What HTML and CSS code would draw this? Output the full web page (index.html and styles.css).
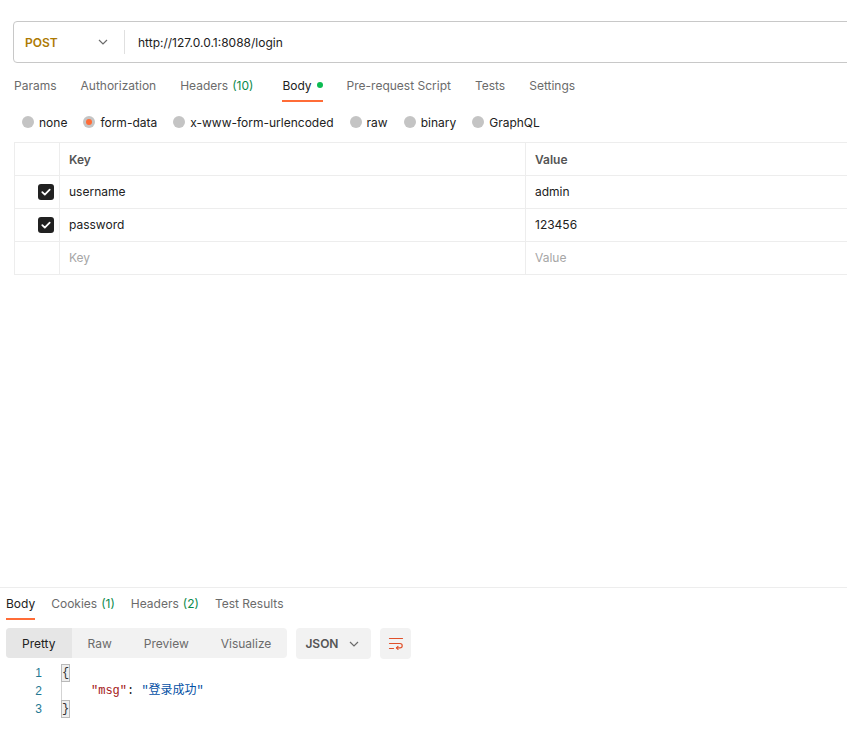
FILE: index.html
```html
<!DOCTYPE html>
<html>
<head>
<meta charset="utf-8">
<link rel="stylesheet" href="styles.css">
</head>
<body>
<div class="app">
  <section class="request">
    <div class="urlbar">
      <div class="method">
        <span class="method-name">POST</span>
        <svg class="chev" width="10" height="6" viewBox="0 0 10 6"><path d="M1 1l4 4 4-4" fill="none" stroke="#6b6b6b" stroke-width="1.2"/></svg>
      </div>
      <div class="divider"></div>
      <div class="url">http://127.0.0.1:8088/login</div>
    </div>

    <nav class="tabs">
      <span class="tab">Params</span>
      <span class="tab">Authorization</span>
      <span class="tab">Headers <span class="count wide">(10)</span></span>
      <span class="tab active">Body <span class="dot"></span></span>
      <span class="tab">Pre-request Script</span>
      <span class="tab">Tests</span>
      <span class="tab">Settings</span>
    </nav>

    <div class="radios">
      <label class="radio"><span class="circle"></span>none</label>
      <label class="radio"><span class="circle on"></span>form-data</label>
      <label class="radio"><span class="circle"></span>x-www-form-urlencoded</label>
      <label class="radio"><span class="circle"></span>raw</label>
      <label class="radio"><span class="circle"></span>binary</label>
      <label class="radio"><span class="circle"></span>GraphQL</label>
    </div>

    <div class="table">
      <div class="row head">
        <div class="cell check"></div>
        <div class="cell key">Key</div>
        <div class="cell val">Value</div>
      </div>
      <div class="row">
        <div class="cell check"><span class="cb"><svg width="16" height="16" viewBox="0 0 16 16"><path d="M4.3 8.2l2.5 2.4 4.9-5" fill="none" stroke="#fff" stroke-width="1.8" stroke-linecap="round" stroke-linejoin="round"/></svg></span></div>
        <div class="cell key">username</div>
        <div class="cell val">admin</div>
      </div>
      <div class="row">
        <div class="cell check"><span class="cb"><svg width="16" height="16" viewBox="0 0 16 16"><path d="M4.3 8.2l2.5 2.4 4.9-5" fill="none" stroke="#fff" stroke-width="1.8" stroke-linecap="round" stroke-linejoin="round"/></svg></span></div>
        <div class="cell key">password</div>
        <div class="cell val">123456</div>
      </div>
      <div class="row">
        <div class="cell check"></div>
        <div class="cell key ph">Key</div>
        <div class="cell val ph">Value</div>
      </div>
    </div>
  </section>

  <section class="response">
    <nav class="rtabs">
      <span class="rtab active">Body</span>
      <span class="rtab">Cookies <span class="count">(1)</span></span>
      <span class="rtab">Headers <span class="count">(2)</span></span>
      <span class="rtab">Test Results</span>
    </nav>
    <div class="toolbar">
      <div class="seg">
        <span class="seg-item sel">Pretty</span>
        <span class="seg-item">Raw</span>
        <span class="seg-item">Preview</span>
        <span class="seg-item">Visualize</span>
      </div>
      <div class="fmt">
        <span class="fmt-name">JSON</span>
        <svg width="10" height="6" viewBox="0 0 10 6"><path d="M1 1l4 4 4-4" fill="none" stroke="#6b6b6b" stroke-width="1.2"/></svg>
      </div>
      <div class="wrap">
        <svg width="16" height="16" viewBox="0 0 16 16" fill="none" stroke="#e0502a" stroke-width="1.2" stroke-linecap="round" stroke-linejoin="round">
          <path d="M1.5 2.5h13"/>
          <path d="M1.5 7.5h10.5a2.2 2.2 0 0 1 0 4.4H8.5"/>
          <path d="M10 10.4l-1.5 1.5 1.5 1.5"/>
          <path d="M1.5 12.5h4"/>
        </svg>
      </div>
    </div>
    <div class="code">
      <div class="line"><span class="ln">1</span><span class="src"><span class="br">{</span></span></div>
      <div class="line"><span class="ln">2</span><span class="src guide"><span class="k">"msg"</span>: <span class="s">"登录成功"</span></span></div>
      <div class="line"><span class="ln">3</span><span class="src"><span class="br">}</span></span></div>
    </div>
  </section>
</div>
</body>
</html>
```

FILE: styles.css
```css
* { box-sizing: border-box; }
html, body { margin: 0; padding: 0; }
body {
  font-family: Inter, "Noto Sans", "Noto Sans CJK SC", sans-serif;
  font-size: 12px;
  color: #212121;
  background: #fff;
  overflow: hidden;
}
.app {
  display: flex;
  flex-direction: column;
  height: 750px;
  width: 847px;
  overflow: hidden;
}
.request {
  flex: 1;
  padding-top: 21px;
}
.urlbar {
  display: flex;
  align-items: center;
  height: 42px;
  margin-left: 13px;
  margin-right: -20px;
  border: 1px solid #c8c8c8;
  border-radius: 4px;
}
.method {
  display: flex;
  align-items: center;
  justify-content: space-between;
  width: 110px;
  padding-left: 11px;
  padding-right: 16px;
}
.method-name {
  font-weight: 600;
  color: #ad7a03;
}
.divider {
  width: 1px;
  height: 24px;
  background: #e0e0e0;
}
.url {
  padding-left: 13px;
  color: #212121;
}
.tabs {
  display: flex;
  gap: 24px;
  padding-left: 14px;
  margin-top: 7px;
  height: 32px;
}
.tab {
  display: flex;
  align-items: center;
  gap: 4px;
  color: #6b6b6b;
  border-bottom: 2px solid transparent;
}
.tab.active {
  color: #212121;
  border-bottom-color: #ff6c37;
}
.count { color: #0b8a4c; }
.count.wide { padding-right: 5px; }
.dot {
  width: 6px;
  height: 6px;
  border-radius: 50%;
  background: #0cbb52;
  margin-left: 1px;
}
.radios {
  display: flex;
  gap: 16px;
  padding-left: 22px;
  margin-top: 8px;
  height: 24px;
  align-items: center;
}
.radio {
  display: flex;
  align-items: center;
  gap: 5px;
}
.circle {
  width: 12px;
  height: 12px;
  border-radius: 50%;
  background: #c4c4c4;
  position: relative;
}
.circle.on::after {
  content: "";
  position: absolute;
  left: 3px; top: 3px;
  width: 6px; height: 6px;
  border-radius: 50%;
  background: #ff6c37;
}
.table {
  margin-top: 8px;
  margin-left: 14px;
  margin-right: -20px;
  border-top: 1px solid #ededed;
  border-left: 1px solid #ededed;
}
.row {
  display: flex;
  height: 33px;
  border-bottom: 1px solid #ededed;
}
.cell {
  display: flex;
  align-items: center;
  padding-bottom: 1px;
}
.head .cell { padding-bottom: 0; font-weight: 600; color: #555; }
.check {
  width: 45px;
  justify-content: flex-end;
  padding-right: 5px;
  border-right: 1px solid #ededed;
}
.key {
  width: 466px;
  padding-left: 9px;
  border-right: 1px solid #ededed;
}
.val {
  flex: 1;
  padding-left: 9px;
}
.ph { color: #a6a6a6; }
.cb {
  display: flex;
  width: 16px;
  height: 16px;
  border-radius: 3px;
  background: #212121;
}
.response {
  height: 163px;
  border-top: 1px solid #ededed;
}
.rtabs {
  display: flex;
  gap: 16px;
  padding-left: 6px;
  height: 32px;
}
.rtab {
  display: flex;
  align-items: center;
  gap: 4px;
  color: #6b6b6b;
  border-bottom: 2px solid transparent;
  padding-top: 1px;
}
.rtab.active {
  color: #212121;
  border-bottom-color: #ff6c37;
}
.toolbar {
  display: flex;
  gap: 9px;
  padding-left: 6px;
  margin-top: 8px;
}
.seg {
  display: flex;
  background: #f2f2f2;
  border-radius: 4px;
  height: 30px;
  overflow: hidden;
}
.seg-item {
  display: flex;
  align-items: center;
  padding: 0 16px;
  color: #6b6b6b;
}
.seg-item.sel {
  background: #e6e6e6;
  color: #212121;
}
.fmt {
  display: flex;
  align-items: center;
  justify-content: space-between;
  width: 75px;
  height: 31px;
  padding: 0 12px 0 9px;
  background: #f2f2f2;
  border-radius: 4px;
}
.fmt-name {
  font-weight: 600;
  font-size: 12px;
  color: #555;
}
.wrap {
  display: flex;
  align-items: center;
  justify-content: center;
  width: 31px;
  height: 31px;
  background: #f2f2f2;
  border-radius: 4px;
}
.code {
  margin-top: 5px;
  font-family: "Liberation Mono", "Noto Sans CJK SC", monospace;
  font-size: 12px;
}
.line {
  display: flex;
  height: 18px;
  align-items: center;
}
.ln {
  width: 42px;
  text-align: right;
  color: #237893;
  font-family: "Liberation Sans", sans-serif;
}
.src {
  margin-left: 19px;
  white-space: pre;
  height: 18px;
  line-height: 18px;
  display: block;
}
.guide {
  border-left: 1px solid #d3d3d3;
  padding-left: 29px;
}
.br {
  display: inline-block;
  border: 1px solid #b9b9b9;
  background: #eee;
  line-height: 16px;
  height: 18px;
  vertical-align: top;
  color: #333;
}
.k { color: #a31515; }
.s { color: #0451a5; }
```
